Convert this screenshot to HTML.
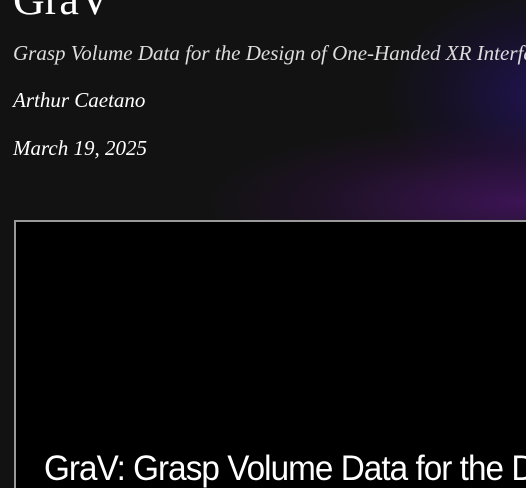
<!DOCTYPE html>
<html><head><meta charset="utf-8"><style>
html,body{margin:0;padding:0;width:526px;height:488px;overflow:hidden;background:#121212;}
body{position:relative;font-family:"Liberation Serif",serif;color:#eee;}
.glow1{position:absolute;left:380px;top:-20px;width:300px;height:230px;border-radius:50%;background:radial-gradient(ellipse at 60% 50%,rgba(40,20,110,0.75),rgba(30,15,80,0.3) 45%,rgba(18,18,18,0) 70%);}
.glow2{position:absolute;left:200px;top:120px;width:460px;height:150px;border-radius:50%;background:radial-gradient(ellipse at 70% 55%,rgba(70,20,100,0.8),rgba(50,15,70,0.35) 45%,rgba(18,18,18,0) 70%);}
.clip{position:absolute;left:0;top:0;width:526px;height:488px;overflow:hidden;}
.t{position:absolute;left:13px;white-space:nowrap;}
h1{position:absolute;left:13px;top:-26px;margin:0;font-weight:normal;font-size:44px;color:#fff;}
.box{position:absolute;left:14px;top:220px;width:512px;height:268px;border-left:2px solid #9a9a9a;border-top:2px solid #9a9a9a;background:#000;overflow:hidden;box-sizing:border-box;}
.vt{position:absolute;left:28px;top:229px;font-family:"Liberation Sans",sans-serif;font-size:35px;color:#fff;white-space:nowrap;letter-spacing:-1px;transform:scaleX(0.95);transform-origin:left;}
</style></head><body><div class="clip">
<div class="glow1"></div><div class="glow2"></div>
<h1>GraV</h1>
<div class="t" style="top:41px;font-size:21px;font-style:italic;color:#ddd;">Grasp Volume Data for the Design of One-Handed XR Interfa</div>
<div class="t" style="top:88px;font-size:21px;font-style:italic;color:#fff;">Arthur Caetano</div>
<div class="t" style="top:136px;font-size:21px;font-style:italic;color:#fff;">March 19, 2025</div>
<div class="box"><div class="vt" style="left:28px;top:227px">GraV: Grasp Volume Data for the D</div></div>
</div></body></html>
